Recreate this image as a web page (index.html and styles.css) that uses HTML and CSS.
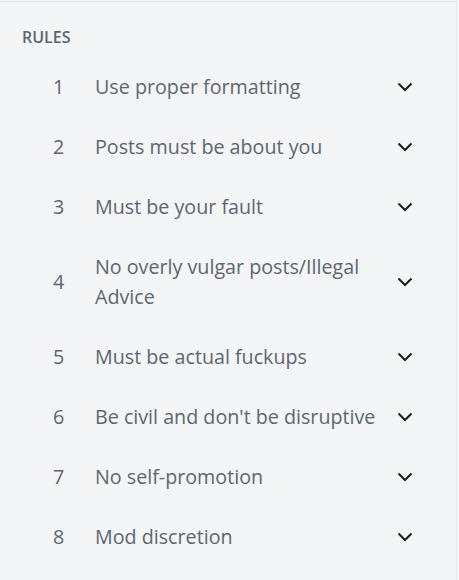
FILE: index.html
```html
<!DOCTYPE html>
<html lang="en">
<head>
    <meta charset="UTF-8">
    <meta name="viewport" content="width=device-width, initial-scale=1.0">
    <title>Rules</title>
    <link rel="stylesheet" href="styles.css">
</head>
<body>
    <div class="panel">
        <h3 class="title">RULES</h3>
        <ol class="rules">
            <li class="rule"><span class="num">1</span><span class="text">Use proper formatting</span><span class="chev"></span></li>
            <li class="rule"><span class="num">2</span><span class="text">Posts must be about you</span><span class="chev"></span></li>
            <li class="rule"><span class="num">3</span><span class="text">Must be your fault</span><span class="chev"></span></li>
            <li class="rule"><span class="num">4</span><span class="text">No overly vulgar posts/Illegal Advice</span><span class="chev"></span></li>
            <li class="rule"><span class="num">5</span><span class="text">Must be actual fuckups</span><span class="chev"></span></li>
            <li class="rule"><span class="num">6</span><span class="text">Be civil and don't be disruptive</span><span class="chev"></span></li>
            <li class="rule"><span class="num">7</span><span class="text">No self-promotion</span><span class="chev"></span></li>
            <li class="rule"><span class="num">8</span><span class="text">Mod discretion</span><span class="chev"></span></li>
        </ol>
    </div>

    <template id="chevron">
        <svg width="16" height="10" viewBox="0 0 16 10"><path d="M1.5 1.5 L8 8 L14.5 1.5" fill="none" stroke="#1c1c1c" stroke-width="2"/></svg>
    </template>
    <script>
        var tpl = document.getElementById("chevron").innerHTML;
        var chevs = document.querySelectorAll(".chev");
        for (var i = 0; i < chevs.length; i++) {
            chevs[i].innerHTML = tpl;
        }
    </script>
</body>
</html>
```
FILE: styles.css
```css
body {
    margin: 0;
    background-color: #f3f5f7;
    font-family: "Open Sans", "Noto Sans", sans-serif;
}
.panel {
    width: 457px;
    height: 580px;
    border-top: 1px solid #dfe2e6;
    border-right: 1px solid #e4e7ea;
    box-sizing: border-box;
    margin-top: 1px;
    padding: 20px 43px 0 22px;
}
.title {
    margin: 0 0 5px 0;
    font-size: 16px;
    font-weight: 600;
    color: #5c6670;
    line-height: 30px;
    height: 30px;
}
.rules {
    list-style: none;
    margin: 0;
    padding: 0;
}
.rule {
    display: flex;
    align-items: center;
    padding: 15px 0;
    color: #5d6670;
    font-size: 19.7px;
    line-height: 30px;
}
.num {
    width: 73px;
    padding-left: 31px;
    box-sizing: border-box;
    flex: none;
}
.text {
    width: 292px;
    flex: none;
}
.chev {
    display: flex;
    margin-left: auto;
}
```
